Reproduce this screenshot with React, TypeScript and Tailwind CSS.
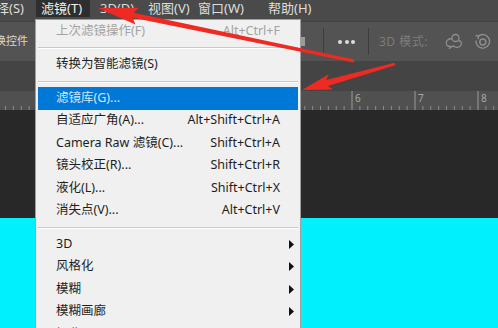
import React from 'react';

type Item =
  | { label: string; shortcut?: string; sub?: boolean; disabled?: boolean; active?: boolean }
  | 'sep';

const menuItems: Item[] = [
  { label: '上次滤镜操作(F)', shortcut: 'Alt+Ctrl+F', disabled: true },
  'sep',
  { label: '转换为智能滤镜(S)' },
  'sep',
  { label: '滤镜库(G)...', active: true },
  { label: '自适应广角(A)...', shortcut: 'Alt+Shift+Ctrl+A' },
  { label: 'Camera Raw 滤镜(C)...', shortcut: 'Shift+Ctrl+A' },
  { label: '镜头校正(R)...', shortcut: 'Shift+Ctrl+R' },
  { label: '液化(L)...', shortcut: 'Shift+Ctrl+X' },
  { label: '消失点(V)...', shortcut: 'Alt+Ctrl+V' },
  'sep',
  { label: '3D', sub: true },
  { label: '风格化', sub: true },
  { label: '模糊', sub: true },
  { label: '模糊画廊', sub: true },
  { label: '扭曲', sub: true },
];

const font = { fontFamily: '"Noto Sans", "Noto Sans CJK SC", sans-serif' };

// tapered annotation arrow, tail -> tip
function arrowPoints(
  tx: number, ty: number, hx: number, hy: number,
  headLen: number, headHalf: number, neck: number, tail: number
) {
  const dx = hx - tx;
  const dy = hy - ty;
  const len = Math.hypot(dx, dy);
  const ux = dx / len;
  const uy = dy / len;
  const nx = -uy;
  const ny = ux;
  const bx = hx - ux * headLen;
  const by = hy - uy * headLen;
  const sx = bx + ux * 4;
  const sy = by + uy * 4;
  const p = (x: number, y: number) => `${x.toFixed(1)},${y.toFixed(1)}`;
  return [
    p(hx, hy),
    p(bx + nx * headHalf, by + ny * headHalf),
    p(sx + nx * neck, sy + ny * neck),
    p(tx + nx * tail, ty + ny * tail),
    p(tx - nx * tail, ty - ny * tail),
    p(sx - nx * neck, sy - ny * neck),
    p(bx - nx * headHalf, by - ny * headHalf),
  ].join(' ');
}

function Ruler() {
  const ticks = [];
  const start = 37;
  const step = 63 / 8;
  for (let i = -5; i < 8 * 8; i++) {
    const x = start + i * step;
    if (x > 498) break;
    const major = i % 8 === 0;
    ticks.push(
      <line
        key={i}
        x1={x}
        x2={x}
        y1={major ? 0 : 15}
        y2={19}
        stroke={major ? '#9a9a9a' : '#8a8a8a'}
        strokeWidth="1"
      />
    );
  }
  return (
    <svg width="498" height="19" className="block">
      {ticks}
      {[
        ['6', 352],
        ['7', 415],
        ['8', 478],
      ].map(([t, x]) => (
        <text key={t} x={Number(x) + 3} y="11" fontSize="10" fill="#a8a8a8" fontFamily="Noto Sans, sans-serif">
          {t}
        </text>
      ))}
    </svg>
  );
}

export default function App() {
  return (
    <div className="relative w-[498px] h-[328px] overflow-hidden bg-[#282828]" style={font}>
      {/* Menu bar */}
      <div className="h-[21px] bg-[#4a4a4a] flex items-start text-[13px] text-[#dedede] whitespace-nowrap">
        <div className="h-[17px] flex items-center ml-[-17px] w-[53px]">选择(S)</div>
        <div className="h-[17px] flex items-center w-[54px] pl-[5px] bg-[#2e2e2e] text-[#f2f2f2]">滤镜(T)</div>
        <div className="h-[17px] flex items-center w-[58px] pl-[10px]">3D(D)</div>
        <div className="h-[17px] flex items-center w-[50px]">视图(V)</div>
        <div className="h-[17px] flex items-center w-[70px]">窗口(W)</div>
        <div className="h-[17px] flex items-center">帮助(H)</div>
      </div>

      {/* Options bar */}
      <div className="h-[40px] bg-[#535353] border-t border-[#424242] flex items-center">
        <div className="ml-[-5px] text-[11px] text-[#d8d8d8] whitespace-nowrap">换控件</div>
        <div className="ml-auto w-[198px] flex items-center">
          <div className="w-[4px] h-[9px] bg-[#9a9a9a] ml-[1px]" />
          <div className="w-px h-[27px] bg-[#3d3d3d] ml-[18px]" />
          <div className="ml-[14px] flex gap-[2.5px]">
            <div className="w-[4px] h-[4px] rounded-full bg-[#dcdcdc]" />
            <div className="w-[4px] h-[4px] rounded-full bg-[#dcdcdc]" />
            <div className="w-[4px] h-[4px] rounded-full bg-[#dcdcdc]" />
          </div>
          <div className="w-px h-[27px] bg-[#3d3d3d] ml-[13px]" />
          <div className="ml-[10px] text-[12px] text-[#7c7c7c] whitespace-nowrap tracking-[0.5px]">3D 模式:</div>
          <svg className="ml-[16px]" width="19" height="17" viewBox="0 0 19 17" fill="none" stroke="#8e8e8e" strokeWidth="1.3">
            <circle cx="11.5" cy="5" r="3.5" />
            <path d="M8 5.5 C3.5 5.5 1.5 8.5 2.5 11.5 C3.5 14 7 14.5 9 12.8 C11 15 15.5 15 17 12 C18.3 9.5 16.5 7.5 14.5 8.2" />
            <path d="M4.5 12.5 L7 14 L5 15.8" />
          </svg>
          <svg className="ml-[11px]" width="17" height="17" viewBox="0 0 17 17" fill="none" stroke="#8e8e8e" strokeWidth="1.4">
            <path d="M4.2 3.3 A6.8 6.8 0 1 1 2 7.5" />
            <path d="M1.5 2.5 L4.6 3.1 L4 6.2" />
            <circle cx="8.8" cy="9" r="3" />
          </svg>
        </div>
      </div>

      {/* Tab strip */}
      <div className="h-[30px] bg-[#444444]" />

      {/* Ruler */}
      <div className="h-[19px] bg-[#505050]">
        <Ruler />
      </div>

      {/* Canvas */}
      <div className="h-[108px] bg-[#282828]" />
      <div className="h-[110px] bg-[#00f0fe]" />

      {/* Filter menu */}
      <div className="absolute left-[35px] top-[19px] w-[266px] h-[330px] bg-[#f0f0f0] border border-[#a0a0a0] text-[12.5px] text-[#1e1e1e] whitespace-nowrap">
        {menuItems.map((item, i) => {
          if (item === 'sep') {
            return (
              <div key={i} className="h-[11px] flex flex-col justify-center px-[2px]">
                <div className="h-px bg-[#c9c9c9]" />
                <div className="h-px bg-white" />
              </div>
            );
          }
          return (
            <div
              key={i}
              className={
                item.active
                  ? 'relative flex items-center h-[22.5px] mx-[2px] px-[18px] bg-[#0078d7] text-[#d4e7f8]'
                  : item.disabled
                  ? 'relative flex items-center h-[22.5px] px-[20px] text-[#a3a3a3]'
                  : 'relative flex items-center h-[22.5px] px-[20px]'
              }
            >
              <span className="flex-1">{item.label}</span>
              {item.shortcut && <span>{item.shortcut}</span>}
              {item.sub && (
                <svg className="absolute right-[6px]" width="5" height="9" viewBox="0 0 5 9">
                  <path d="M0 0 L5 4.5 L0 9 Z" fill="#111" />
                </svg>
              )}
            </div>
          );
        })}
      </div>

      {/* Red annotation arrows */}
      <svg className="absolute inset-0 pointer-events-none" width="498" height="328">
        <polygon points={arrowPoints(354, 61, 98, 8, 40, 8.5, 2.6, 1.4)} fill="#ee2a22" />
        <polygon points={arrowPoints(395, 64, 302, 90, 30, 8, 3, 1.4)} fill="#ee2a22" />
      </svg>
    </div>
  );
}
